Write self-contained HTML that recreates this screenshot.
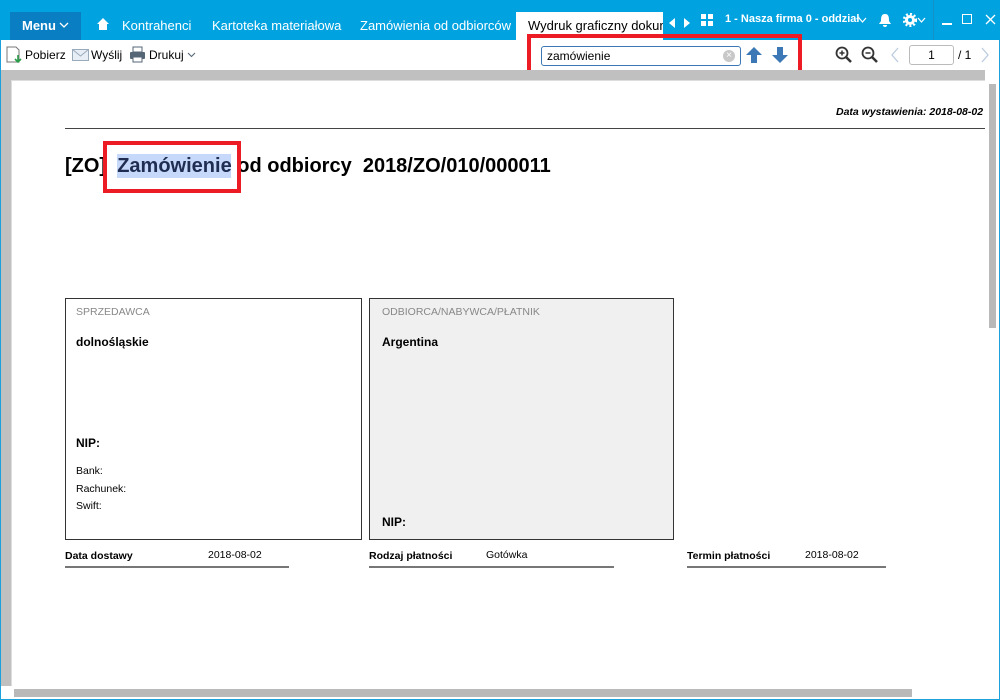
<!DOCTYPE html>
<html><head><meta charset="utf-8"><style>
*{margin:0;padding:0;box-sizing:border-box}
body{width:1000px;height:700px;overflow:hidden;position:relative;background:#fff;font-family:"Liberation Sans",sans-serif}
.a{position:absolute}
.top{left:0;top:0;width:1000px;height:40px;background:#00a3e0}
.tb{color:#fff;font-size:13px;top:18px}
.doc{font-family:"Liberation Sans",sans-serif;color:#000;white-space:nowrap}
</style></head><body>
<div class="a top"></div>
<div class="a" style="left:10px;top:12px;width:71px;height:28px;background:#0a7ec2"></div>
<div class="a tb" style="left:22px;font-weight:bold">Menu</div>
<svg class="a" style="left:59px;top:21px" width="10" height="8"><path d="M1 2 L5 6 L9 2" stroke="#fff" stroke-width="1.3" fill="none"/></svg>
<svg class="a" style="left:96px;top:17px" width="14" height="14"><path d="M1 7 L7 1 L13 7 L11 7 L11 13 L3 13 L3 7 Z" fill="#fff"/></svg>
<div class="a tb" style="left:122px">Kontrahenci</div>
<div class="a tb" style="left:212px">Kartoteka materiałowa</div>
<div class="a tb" style="left:360px">Zamówienia od odbiorców</div>
<div class="a" style="left:516px;top:12px;width:147px;height:28px;background:#fff;overflow:hidden"><div style="padding:6px 0 0 12px;font-size:13px;white-space:nowrap;color:#000">Wydruk graficzny dokumentu</div></div>
<div class="a" style="left:669px;top:18px;width:0;height:0;border:5px solid transparent;border-right:6px solid #fff;border-left:0"></div>
<div class="a" style="left:684px;top:18px;width:0;height:0;border:5px solid transparent;border-left:6px solid #fff;border-right:0"></div>
<svg class="a" style="left:701px;top:14px" width="12" height="12"><rect x="0" y="0" width="5" height="5" fill="#fff"/><rect x="7" y="0" width="5" height="5" fill="#fff"/><rect x="0" y="7" width="5" height="5" fill="#fff"/><rect x="7" y="7" width="5" height="5" fill="#fff"/></svg>
<div class="a tb" style="left:725px;top:13px;font-weight:bold;font-size:11px;white-space:nowrap">1 - Nasza firma 0 - oddział</div>
<svg class="a" style="left:858px;top:17px" width="9" height="7"><path d="M1 1 L4.5 5 L8 1" stroke="#fff" stroke-width="1.2" fill="none"/></svg>
<svg class="a" style="left:878px;top:13px" width="14" height="15"><path d="M7 1 C3 1 3 5 3 8 L1 11 L13 11 L11 8 C11 5 11 1 7 1Z M5 12 A2 2 0 0 0 9 12Z" fill="#fff"/></svg>
<svg class="a" style="left:903px;top:13px" width="14" height="14"><circle cx="7" cy="7" r="5" fill="#fff"/><circle cx="7" cy="7" r="6" fill="none" stroke="#fff" stroke-width="2.5" stroke-dasharray="2 2"/><circle cx="7" cy="7" r="2" fill="#00a3e0"/></svg>
<svg class="a" style="left:917px;top:17px" width="9" height="7"><path d="M1 1 L4.5 5 L8 1" stroke="#fff" stroke-width="1.2" fill="none"/></svg>
<div class="a" style="left:933px;top:0;width:1px;height:40px;background:#1590c8"></div>
<div class="a" style="left:942px;top:23px;width:10px;height:1.5px;background:#fff"></div>
<div class="a" style="left:962px;top:14px;width:10px;height:10px;border:1.3px solid #fff"></div>
<svg class="a" style="left:985px;top:14px" width="11" height="11"><path d="M1 1 L10 10 M10 1 L1 10" stroke="#fff" stroke-width="1.3"/></svg>

<!-- toolbar -->
<svg class="a" style="left:6px;top:46px" width="16" height="18"><path d="M1 1 H10 L13 4 V16 H1Z" fill="#fff" stroke="#777"/><path d="M12 9 V16 M9 13 L12 16 L15 13" stroke="#2a9d4a" stroke-width="1.6" fill="none"/></svg>
<div class="a" style="left:25px;top:48px;font-size:12px">Pobierz</div>
<svg class="a" style="left:72px;top:49px" width="17" height="12"><rect x="0.5" y="0.5" width="16" height="11" fill="#e8eef6" stroke="#9ab"/><path d="M0.5 0.5 L8.5 7 L16.5 0.5" stroke="#9ab" fill="none"/></svg>
<div class="a" style="left:91px;top:48px;font-size:12px">Wyślij</div>
<svg class="a" style="left:129px;top:46px" width="17" height="17"><rect x="4" y="1" width="9" height="5" fill="#fff" stroke="#567"/><rect x="1" y="6" width="15" height="7" rx="1" fill="#567"/><rect x="4" y="11" width="9" height="5" fill="#fff" stroke="#567"/></svg>
<div class="a" style="left:149px;top:48px;font-size:12px">Drukuj</div>
<svg class="a" style="left:187px;top:52px" width="9" height="6"><path d="M1 1 L4.5 4.5 L8 1" stroke="#567" stroke-width="1.1" fill="none"/></svg>

<div class="a" style="left:541px;top:46px;width:200px;height:20px;border:1px solid #3b78b5;border-radius:3px;background:#fff"></div>
<div class="a" style="left:547px;top:49px;font-size:12px">zamówienie</div>
<div class="a" style="left:723px;top:50px;width:12px;height:12px;border-radius:6px;background:#c8c8c8;color:#fff;font-size:10px;line-height:12px;text-align:center">×</div>
<svg class="a" style="left:745px;top:46px" width="18" height="18"><path d="M9 1 L17 9 L12 9 L12 17 L6 17 L6 9 L1 9Z" fill="#3b78b5"/></svg>
<svg class="a" style="left:771px;top:46px" width="18" height="18"><path d="M9 17 L17 9 L12 9 L12 1 L6 1 L6 9 L1 9Z" fill="#3b78b5"/></svg>
<div class="a" style="left:527px;top:34px;width:275px;height:45px;border:4px solid #ed1c24"></div>

<svg class="a" style="left:835px;top:46px" width="18" height="18"><circle cx="7" cy="7" r="5.5" fill="none" stroke="#333" stroke-width="1.8"/><path d="M11 11 L16 16" stroke="#333" stroke-width="2.5"/><path d="M4.5 7 H9.5 M7 4.5 V9.5" stroke="#333" stroke-width="1.5"/></svg>
<svg class="a" style="left:861px;top:46px" width="18" height="18"><circle cx="7" cy="7" r="5.5" fill="none" stroke="#333" stroke-width="1.8"/><path d="M11 11 L16 16" stroke="#333" stroke-width="2.5"/><path d="M4.5 7 H9.5" stroke="#333" stroke-width="1.5"/></svg>
<svg class="a" style="left:890px;top:47px" width="10" height="16"><path d="M8 1 L2 8 L8 15" stroke="#bcd" stroke-width="1.3" fill="none"/></svg>
<div class="a" style="left:909px;top:45px;width:45px;height:20px;border:1px solid #bbb;border-radius:3px;font-size:12px;text-align:center;line-height:18px">1</div>
<div class="a" style="left:958px;top:48px;font-size:12px">/ 1</div>
<svg class="a" style="left:980px;top:47px" width="10" height="16"><path d="M2 1 L8 8 L2 15" stroke="#bcd" stroke-width="1.3" fill="none"/></svg>

<!-- gray area -->
<div class="a" style="left:1px;top:70px;width:984px;height:616px;background:#c0c0c0"></div>
<div class="a" style="left:11px;top:80px;width:974px;height:606px;background:#fff;border-left:1px solid #ddd;border-top:1px solid #ddd"></div>
<div class="a" style="left:985px;top:70px;width:14px;height:616px;background:#fff"></div>
<div class="a" style="left:989px;top:84px;width:7px;height:244px;background:#b9b9b9"></div>
<div class="a" style="left:1px;top:686px;width:998px;height:13px;background:#fff"></div>
<div class="a" style="left:14px;top:689px;width:898px;height:8px;background:#b9b9b9"></div>
<div class="a" style="left:0;top:40px;width:1px;height:660px;background:#1ba1dc"></div>
<div class="a" style="left:999px;top:40px;width:1px;height:660px;background:#1ba1dc"></div>
<div class="a" style="left:0;top:699px;width:1000px;height:1px;background:#1ba1dc"></div>

<!-- document -->
<div class="a" style="left:830px;top:100px;width:155px;height:25px;overflow:hidden"><div class="doc" style="position:absolute;left:6px;top:6px;font-size:10.5px;font-weight:bold;font-style:italic">Data wystawienia: 2018-08-02</div></div>
<div class="a" style="left:65px;top:128px;width:920px;height:1px;background:#444"></div>
<div class="a" style="left:117px;top:154px;width:114px;height:24px;background:#c6d9fa"></div>
<div class="a doc" style="left:65px;top:155px;font-size:20px;font-weight:bold;white-space:pre">[ZO]  <span style="color:#1f2d52">Zamówienie</span> od odbiorcy  2018/ZO/010/000011</div>
<div class="a" style="left:103px;top:141px;width:138px;height:52px;border:4px solid #ed1c24"></div>

<div class="a" style="left:65px;top:298px;width:297px;height:242px;border:1px solid #333"></div>
<div class="a" style="left:369px;top:298px;width:305px;height:242px;border:1px solid #333;background:#f0f0f0"></div>
<div class="a doc" style="left:76px;top:306px;font-size:10.5px;color:#888">SPRZEDAWCA</div>
<div class="a doc" style="left:76px;top:335px;font-size:12px;font-weight:bold">dolnośląskie</div>
<div class="a doc" style="left:76px;top:436px;font-size:12px;font-weight:bold">NIP:</div>
<div class="a doc" style="left:76px;top:463px;font-size:10.5px;line-height:17.5px">Bank:<br>Rachunek:<br>Swift:</div>
<div class="a doc" style="left:382px;top:306px;font-size:10.5px;color:#888">ODBIORCA/NABYWCA/PŁATNIK</div>
<div class="a doc" style="left:382px;top:335px;font-size:12px;font-weight:bold">Argentina</div>
<div class="a doc" style="left:382px;top:515px;font-size:12px;font-weight:bold">NIP:</div>

<div class="a doc" style="left:65px;top:550px;font-size:10.5px;font-weight:bold">Data dostawy</div>
<div class="a doc" style="left:208px;top:549px;font-size:10.5px">2018-08-02</div>
<div class="a" style="left:65px;top:566px;width:224px;height:2px;background:#777"></div>
<div class="a doc" style="left:369px;top:550px;font-size:10.5px;font-weight:bold">Rodzaj płatności</div>
<div class="a doc" style="left:486px;top:549px;font-size:10.5px">Gotówka</div>
<div class="a" style="left:369px;top:566px;width:245px;height:2px;background:#777"></div>
<div class="a doc" style="left:687px;top:550px;font-size:10.5px;font-weight:bold">Termin płatności</div>
<div class="a doc" style="left:805px;top:549px;font-size:10.5px">2018-08-02</div>
<div class="a" style="left:687px;top:566px;width:199px;height:2px;background:#777"></div>
</body></html>
